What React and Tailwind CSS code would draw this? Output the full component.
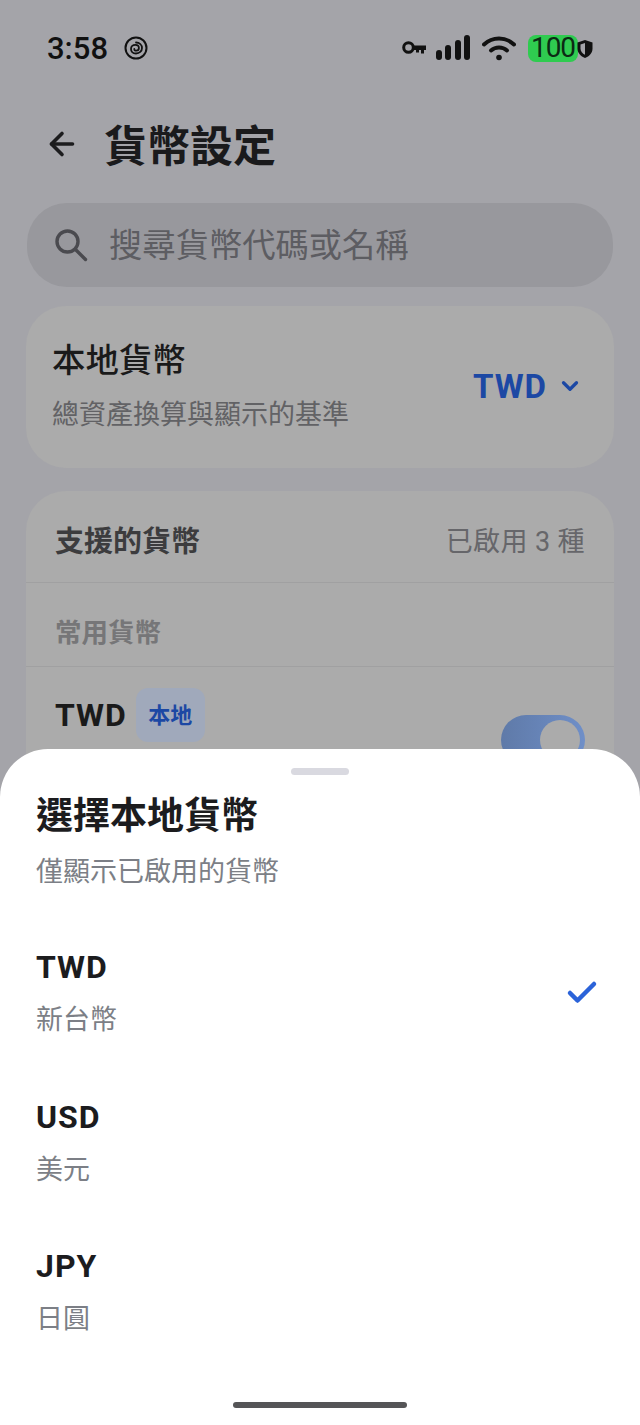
import { ArrowLeft, Check, ChevronDown } from 'lucide-react'

const fontStack = 'font-["Roboto","Noto_Sans_CJK_TC",sans-serif]'

const currencies = [
  { code: 'TWD', name: '新台幣', selected: true },
  { code: 'USD', name: '美元' },
  { code: 'JPY', name: '日圓' },
]

function StatusIcons() {
  return (
    <div className="flex items-center">
      {/* Key */}
      <svg width="24" height="16" viewBox="0 0 24 16" className="mr-[10px]">
        <circle cx="6.5" cy="7.5" r="4.8" fill="none" stroke="#111" strokeWidth="3" />
        <path d="M11 5.5h13v4.5h-2v3.5h-3V10h-2v2.5h-3V10h-3z" fill="#111" />
      </svg>
      {/* Signal */}
      <div className="flex items-end gap-[3.5px] h-6 mr-3">
        <div className="w-[6px] h-[10px] rounded-full bg-[#111]" />
        <div className="w-[6px] h-[15px] rounded-full bg-[#111]" />
        <div className="w-[6px] h-[20px] rounded-full bg-[#111]" />
        <div className="w-[6px] h-[25px] rounded-full bg-[#111]" />
      </div>
      {/* Wifi */}
      <svg width="34" height="26" viewBox="0 0 34 26" fill="none" stroke="#111" strokeWidth="4" strokeLinecap="round" className="mr-3">
        <path d="M2 9.5C10.5 1.5 23.5 1.5 32 9.5" />
        <path d="M9 15.5C13.5 11.5 20.5 11.5 25 15.5" />
        <circle cx="17" cy="22.5" r="2.8" fill="#111" stroke="none" />
      </svg>
      {/* Battery with shield */}
      <div className="relative flex items-center">
        <div className="w-[50px] h-[27px] rounded-lg bg-[#2fcb50] flex items-center justify-center text-[28px] leading-none text-[#0c2a14] tracking-[-1px]">
          100
        </div>
        <svg width="18" height="20" viewBox="0 0 18 20" className="absolute left-[48px] top-[4px]">
          <path d="M9 1l7.5 2.6v6c0 4.6-3.2 7.8-7.5 9.4-4.3-1.6-7.5-4.8-7.5-9.4v-6z" fill="#111" />
          <path d="M9 4l-4.5 1.6v4c0 2.9 1.9 5 4.5 6.2z" fill="#a4a4a9" />
        </svg>
      </div>
    </div>
  )
}

function BottomSheet() {
  return (
    <div className="absolute left-0 right-0 top-[749px] bottom-0 bg-white rounded-t-[48px] px-9">
      <div className="flex justify-center pt-[19px]">
        <div className="w-[58px] h-[7px] rounded-full bg-[#d9d9e0]" />
      </div>
      <h2 className="mt-[17px] text-[37px] leading-[50px] font-bold text-[#1c1c1e]">選擇本地貨幣</h2>
      <p className="mt-[12px] text-[27px] leading-[36px] text-[#7c7f86]">僅顯示已啟用的貨幣</p>

      <div className="mt-[28px]">
        {currencies.map(c => (
          <div key={c.code} className="flex items-center justify-between h-[149.5px]">
            <div>
              <div className="text-[32px] leading-[40px] font-bold tracking-[1px] text-[#1c1c1e]">{c.code}</div>
              <div className="mt-[15px] text-[27px] leading-[36px] text-[#7c7f86]">{c.name}</div>
            </div>
            {c.selected && <Check size={36} strokeWidth={3} className="text-[#2b63d9] mr-[4px]" />}
          </div>
        ))}
      </div>
    </div>
  )
}

export default function App() {
  return (
    <div className={`relative h-[1425px] overflow-hidden bg-[#a4a4a9] ${fontStack}`}>
      {/* Status bar */}
      <div className="flex items-center justify-between h-[96px] pl-[47px] pr-[62px] text-[#111]">
        <div className="flex items-center gap-[16px]">
          <span className="text-[31px] leading-none font-medium">3:58</span>
          <svg width="24" height="24" viewBox="0 0 24 24" fill="none" stroke="#111">
            <circle cx="12" cy="12" r="10.5" strokeWidth="2" />
            <path d="M12 6.5c3.5 0 6 2.4 6 5.5s-2.6 5.5-6 5.5-5-2.3-5-4.6 1.9-4 4.3-4 3.6 1.6 3.6 3.2-1.2 2.6-2.6 2.6-2-.9-2-1.8" strokeWidth="1.8" strokeLinecap="round" />
          </svg>
        </div>
        <StatusIcons />
      </div>

      {/* Header */}
      <div className="flex items-center h-[96px] pl-[44px] pt-[6px]">
        <ArrowLeft size={36} strokeWidth={2.4} className="text-[#1c1c1e] -mt-[6px]" />
        <h1 className="ml-[24px] text-[43px] leading-none font-bold text-[#1a1a1c]">貨幣設定</h1>
      </div>

      {/* Search */}
      <div className="mx-[27px] mt-[11px] h-[84px] rounded-[40px] bg-[#98989d] flex items-center pl-[27px]">
        <svg width="34" height="34" viewBox="0 0 34 34" fill="none" stroke="#4a4a4f" strokeWidth="3.4" strokeLinecap="round">
          <circle cx="13.5" cy="13.5" r="10.5" />
          <path d="M21.5 21.5L31.5 31.5" />
        </svg>
        <span className="ml-[21px] pt-[2px] text-[33.3px] text-[#5d5d62]">搜尋貨幣代碼或名稱</span>
      </div>

      {/* Local currency card */}
      <div className="mx-[26px] mt-[19px] h-[162px] rounded-[40px] bg-[#ababab] flex items-center justify-between pl-[26px] pr-[31px]">
        <div className="-mt-[2px]">
          <div className="text-[33.4px] leading-[44px] font-medium text-[#1a1a1a]">本地貨幣</div>
          <div className="mt-[14px] text-[27px] leading-[36px] text-[#626265]">總資產換算與顯示的基準</div>
        </div>
        <div className="flex items-center gap-[10px] text-[#1c48a4] -mt-[2px]">
          <span className="text-[33px] leading-none font-bold tracking-[1px]">TWD</span>
          <ChevronDown size={26} strokeWidth={3} />
        </div>
      </div>

      {/* Supported currencies card */}
      <div className="mx-[26px] mt-[23px] rounded-t-[40px] bg-[#ababab]">
        <div className="flex items-center justify-between h-[92px] pl-[29px] pr-[29px] pt-[12px] border-b border-[#a0a0a1]">
          <span className="text-[29px] font-bold text-[#3c3c3e]">支援的貨幣</span>
          <span className="text-[27px] tracking-[0.4px] text-[#66666a]">已啟用 3 種</span>
        </div>
        <div className="flex items-center h-[84px] pl-[29px] pt-[17px] border-b border-[#a0a0a1]">
          <span className="text-[26.5px] font-bold text-[#767678]">常用貨幣</span>
        </div>
        <div className="flex items-start justify-between h-[120px] pl-[29px] pr-[29px] pt-[21px]">
          <div className="flex items-center gap-[9px]">
            <span className="text-[32px] leading-none font-bold tracking-[1px] text-[#1a1a1a]">TWD</span>
            <span className="flex items-center justify-center w-[69px] h-[54px] rounded-xl bg-[#a0a9bb] text-[22px] font-bold text-[#1c48a4]">本地</span>
          </div>
          <div className="mt-[27px] w-[84px] h-[50px] rounded-full bg-linear-to-r from-[#5f7aa8] to-[#6f8fc8] flex items-center justify-end pr-[5px]">
            <div className="w-[40px] h-[40px] rounded-full bg-[#ababab]" />
          </div>
        </div>
      </div>

      <BottomSheet />

      {/* Home indicator */}
      <div className="absolute left-[233px] bottom-[17px] w-[174px] h-[6px] rounded-full bg-[#555557]" />
    </div>
  )
}
